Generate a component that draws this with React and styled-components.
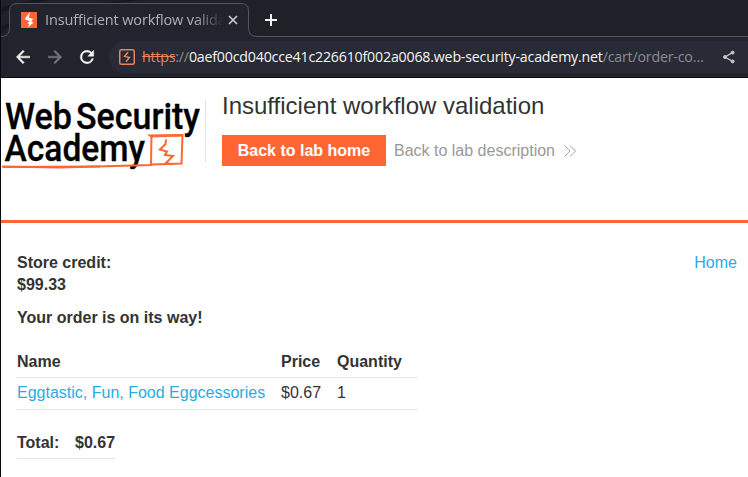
import React from 'react';
import styled, { createGlobalStyle } from 'styled-components';

const GlobalStyle = createGlobalStyle`
  * { box-sizing: border-box; }
  body { margin: 0; background: #fff; overflow: hidden; }
`;

const Window = styled.div`
  width: 748px;
  height: 477px;
  display: flex;
  flex-direction: column;
  border-left: 1px solid #08090e;
  background: #fff;
  overflow: hidden;
`;

const Chrome = styled.div`
  height: 78px;
  flex: none;
  background: #22242d;
  border-bottom: 1px solid #08090d;
  font-family: 'Open Sans', 'Noto Sans', sans-serif;
`;

const TabStrip = styled.div`
  position: relative;
  height: 37px;
  display: flex;
  align-items: center;
  padding: 3px 0 0 20px;
`;

const TabOutline = styled.svg`
  position: absolute;
  left: 0;
  top: 0;
`;

const TabIcon = styled.svg`
  flex: none;
  position: relative;
`;

const TabTitle = styled.div`
  position: relative;
  width: 177px;
  margin-left: 8px;
  overflow: hidden;
  white-space: nowrap;
  font-size: 14.5px;
  letter-spacing: -0.12px;
  line-height: 22px;
  color: #b0b0b1;
  mask-image: linear-gradient(to right, #000 150px, transparent 178px);
`;

const StripButton = styled.svg`
  position: relative;
  flex: none;
  margin-left: ${(p) => p.$gap}px;
`;

const Toolbar = styled.div`
  height: 40px;
  display: flex;
  align-items: center;
  padding-left: 12px;
`;

const NavIcon = styled.svg`
  flex: none;
  margin-right: ${(p) => p.$after}px;
`;

const AddressBar = styled.div`
  flex: 1;
  height: 32px;
  display: flex;
  align-items: center;
  padding: 0 10px;
  border-radius: 16px 0 0 16px;
  background: #282a36;
`;

const Url = styled.div`
  width: 564px;
  margin: 0 16px 0 7px;
  flex: none;
  white-space: nowrap;
  font-size: 14.2px;
  letter-spacing: -0.19px;
  line-height: 20px;
  color: #8b8d92;
`;

const Scheme = styled.span`
  color: #e8835c;
  text-decoration: line-through;
`;

const Host = styled.span`
  color: #f5f5f3;
`;

const Page = styled.div`
  flex: 1;
  font: 16px/22px 'Liberation Sans', Arial, sans-serif;
  color: #333332;
`;

const LabHeader = styled.header`
  height: 145px;
  display: flex;
  border-bottom: 3px solid #ff6633;
`;

const Logo = styled.svg`
  flex: none;
  margin-top: 12px;
`;

const Divider = styled.div`
  width: 1px;
  height: 62px;
  margin: 22px 16px 0 0;
  background: #e3e3e3;
`;

const LabInfo = styled.div`
  padding-top: 14px;
`;

const Title = styled.h2`
  margin: 0;
  font-size: 24px;
  line-height: 28px;
  font-weight: 400;
`;

const Actions = styled.div`
  display: flex;
  align-items: center;
  height: 31px;
  margin-top: 15px;
`;

const HomeButton = styled.a`
  width: 164px;
  height: 31px;
  line-height: 31px;
  text-align: center;
  font-weight: 700;
  color: #fff;
  background: #ff6633;
`;

const DescriptionLink = styled.a`
  display: flex;
  align-items: center;
  gap: 9px;
  margin-left: 8px;
  color: #999;
`;

const Content = styled.main`
  padding: 29px 11px 0 16px;
`;

const CreditRow = styled.div`
  display: flex;
  justify-content: space-between;
  height: 44px;
  font-weight: 700;
`;

const Link = styled.a`
  color: #29abe2;
  font-weight: 400;
`;

const Notice = styled.p`
  margin: 11px 0 18px;
  font-weight: 700;
`;

const Table = styled.div`
  width: ${(p) => p.$width}px;
  margin-bottom: 17px;
`;

const Row = styled.div`
  display: grid;
  grid-template-columns: ${(p) => p.$columns};
  height: ${(p) => p.$height}px;
  padding-top: ${(p) => p.$top}px;
  border-bottom: 1px solid #e5e5e5;
  font-weight: ${(p) => (p.$bold ? 700 : 400)};
`;

const columns = '264px 56px 1fr';

export default function App() {
  return (
    <>
      <GlobalStyle />
      <Window>
        <Chrome>
          <TabStrip>
            <TabOutline width="747" height="37" fill="none">
              <path d="M0 0H747V36H256Q248 36 248 28V11Q248 3 240 3H16Q8.500 3 8.500 11V28Q8.500 36 0 36Z" fill="#1f2129" />
              <path d="M0 7L33 0H48L0 12ZM0 27L9 23V27L0 31ZM100 3L124 0H139L115 3Z" fill="#171920" />
              <path d="M8.500 37V11Q8.500 3.500 16 3.500H240Q248.500 3.500 248.500 11V37Z" fill="#22242d" />
              <path d="M0 36.500Q8.500 36.500 8.500 28V11Q8.500 3.500 16 3.500H240Q247.500 3.500 247.500 11V28Q247.500 36.500 256 36.500H747" stroke="#52545d" />
            </TabOutline>
            <TabIcon width="16" height="16" viewBox="0 0 16 16">
              <path d="M0 0H16V16H0Z" fill="#ff6633" />
              <path d="M9 0L4 6.500L5 8L9 9L6.500 11L8.200 12L7 15.500L12.500 10.500L10.500 9.700L12 6.800L7.800 5.700Z" fill="#fff" />
            </TabIcon>
            <TabTitle>Insufficient workflow validation</TabTitle>
            <StripButton $gap={6} width="10" height="10" fill="none" stroke="#c9c9c7" strokeWidth="1.700">
              <path d="M1 1L9 9M9 1L1 9" />
            </StripButton>
            <StripButton $gap={27} width="12" height="12" fill="none" stroke="#f2f2ef" strokeWidth="2">
              <path d="M6 0V12M0 6H12" />
            </StripButton>
          </TabStrip>
          <Toolbar>
            <NavIcon $after={12} width="20" height="20" viewBox="0 0 24 24" fill="#f2f2ef" stroke="#f2f2ef" strokeWidth=".6">
              <path d="M20 11H7.830l5.590-5.590L12 4l-8 8 8 8 1.410-1.410L7.830 13H20z" />
            </NavIcon>
            <NavIcon $after={12} width="20" height="20" viewBox="0 0 24 24" fill="#75767b" stroke="#75767b" strokeWidth=".6">
              <path d="M12 4l-1.410 1.410L16.170 11H4v2h12.170l-5.580 5.590L12 20l8-8z" />
            </NavIcon>
            <NavIcon $after={12} width="20" height="20" viewBox="0 0 24 24" fill="#f2f2ef" stroke="#f2f2ef" strokeWidth=".6">
              <path d="M17.650 6.350A7.950 7.950 0 0 0 12 4a8 8 0 1 0 7.730 10h-2.080A6 6 0 1 1 12 6c1.660 0 3.140.69 4.220 1.780L13 11h7V4z" />
            </NavIcon>
            <AddressBar>
              <NavIcon $after={0} width="16" height="16" viewBox="0 0 16 16" fill="none" stroke="#e8835c">
                <rect x=".75" y=".75" width="14.500" height="14.500" rx="1.500" strokeWidth="1.500" />
                <path d="M9 3.300L5.500 7.400L10.400 8.500L7 12.700" strokeWidth="1.500" />
              </NavIcon>
              <Url>
                <Scheme>https</Scheme>://<Host>0aef00cd040cce41c226610f002a0068.web-security-academy.net</Host>/cart/order-co…
              </Url>
              <NavIcon $after={0} width="14" height="14" viewBox="0 0 14 14" fill="#c3c3c2" stroke="#c3c3c2">
                <path d="M10.500 2.600L3 7L10.500 11.400" fill="none" strokeWidth="1.300" />
                <circle cx="10.600" cy="2.600" r="1.500" />
                <circle cx="3" cy="7" r="1.500" />
                <circle cx="10.600" cy="11.400" r="1.500" />
              </NavIcon>
            </AddressBar>
          </Toolbar>
        </Chrome>
        <Page>
          <LabHeader>
            <Logo width="204" height="80" viewBox="1 90 204 80">
              <g fill="#000" stroke="#000" strokeWidth=".3" fontFamily="Roboto, sans-serif" fontWeight="500" fontSize="37">
                <text x="5" y="128.500" textLength="67" lengthAdjust="spacingAndGlyphs">Web</text>
                <text x="76" y="128.500" textLength="124" lengthAdjust="spacingAndGlyphs">Security</text>
                <text x="4.500" y="161" textLength="140.500" lengthAdjust="spacingAndGlyphs">Academy</text>
              </g>
              <g fill="none" stroke="#ff6633" strokeWidth="2">
                <path d="M2 166.500L60 167.500L151 165L151.500 136.500L150 135.500L182.500 135L181.500 163.500L152 164.500" />
                <path d="M3 167L100 166.500M150 136.500L182 135.500" />
                <path d="M166 139.500L165.500 144L160 149.500L167 151.500L165 155L173 156L166 163L172 164.500" />
              </g>
            </Logo>
            <Divider />
            <LabInfo>
              <Title>Insufficient workflow validation</Title>
              <Actions>
                <HomeButton>Back to lab home</HomeButton>
                <DescriptionLink>
                  Back to lab description
                  <svg width="12" height="12" fill="none" stroke="#999" strokeWidth=".9">
                    <path d="M.5 .5L6 6L.5 11.500M6 .5L11.500 6L6 11.500" />
                  </svg>
                </DescriptionLink>
              </Actions>
            </LabInfo>
          </LabHeader>
          <Content>
            <CreditRow>
              <div>Store credit:<br />$99.33</div>
              <Link>Home</Link>
            </CreditRow>
            <Notice>Your order is on its way!</Notice>
            <Table $width={401}>
              <Row $columns={columns} $height={31} $top={4} $bold>
                <span>Name</span><span>Price</span><span>Quantity</span>
              </Row>
              <Row $columns={columns} $height={32} $top={4}>
                <Link>Eggtastic, Fun, Food Eggcessories</Link><span>$0.67</span><span>1</span>
              </Row>
            </Table>
            <Table $width={98}>
              <Row $columns="58px 1fr" $height={32} $top={5} $bold>
                <span>Total:</span><span>$0.67</span>
              </Row>
            </Table>
          </Content>
        </Page>
      </Window>
    </>
  );
}
